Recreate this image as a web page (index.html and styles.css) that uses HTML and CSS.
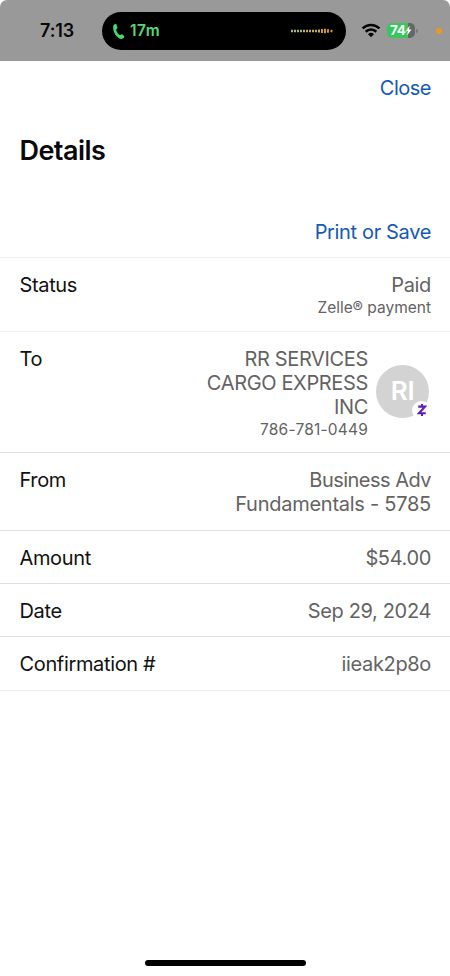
FILE: index.html
```html
<!DOCTYPE html>
<html lang="en">
<head>
<meta charset="utf-8">
<title>Payment details</title>
<link rel="stylesheet" href="styles.css">
</head>
<body>
<header class="statusbar">
  <span class="clock">7:13</span>
  <div class="island">
    <svg class="phone" width="13" height="17" viewBox="0 0 13 17"><path d="M1.2 3.2C1.4 1.3 3.4 .5 4.3 1.1L5.5 4.4C5.7 5.2 4.1 6 4.2 6.8C4.5 8.7 6 11 7.5 12C8.4 12.5 9.3 10.9 10.2 11.3L12.3 13.3C12.8 14.2 11 16.1 9.3 15.9C4.7 15.3.5 8.7 1.2 3.2Z" fill="#43dc68"/></svg>
    <span class="call">17m</span>
    <svg class="wave" width="42" height="6" viewBox="0 0 42 6" stroke-width="1.8"><path stroke="#b6cf78" d="M1 1.8v2.4M4 1.8v2.4M7 1.8v2.4M10 1.8v2.4"/><path stroke="#d5c45e" d="M13 1.8v2.4M16 1.8v2.4M19 1.8v2.4M22 1.8v2.4M25 1.8v2.4M28 1.5v3"/><path stroke="#eda52f" d="M31 1v4M34 .8v4.4M37 1.3v3.4M40.5 1.8v2.4"/></svg>
  </div>
  <svg class="wifi" width="20" height="15" viewBox="0 0 20 15" fill="none" stroke="#060606" stroke-width="2.6"><path d="M1.6 5.4a12 12 0 0 1 16.8 0M4.7 8.7a7.6 7.6 0 0 1 10.6 0"/><path d="M10 14.2L7 11.2a4.4 4.4 0 0 1 6 0Z" fill="#060606" stroke="none"/></svg>
  <div class="battery">
    <span class="level">74</span>
    <svg class="bolt" width="7" height="11" viewBox="0 0 7 11"><path d="M4.8.5L.5 6.2h2.4L2 10.5l4.5-6H4z" fill="#fff"/></svg>
  </div>
  <i class="cap"></i>
  <i class="mic"></i>
</header>
<main>
  <a class="link close">Close</a>
  <h1>Details</h1>
  <a class="link print">Print or Save</a>
  <dl>
    <div class="row faint status"><dt>Status</dt><dd><span>Paid</span><small>Zelle® payment</small></dd></div>
    <div class="row faint to"><dt>To</dt>
      <dd><span>RR SERVICES</span><span>CARGO EXPRESS</span><span>INC</span><small class="number">786-781-0449</small></dd>
      <div class="avatar"><span>RI</span>
        <div class="badge"><svg width="10" height="14" viewBox="0 0 10 14" fill="none" stroke="#6020b8" stroke-width="2.1"><path d="M1.2 3.6H8L2 10.2H8.8M5 1v2.6M5 10.2v2.8"/></svg></div>
      </div>
    </div>
    <div class="row from"><dt>From</dt><dd><span class="owner">Business Adv</span><span class="account">Fundamentals - 5785</span></dd></div>
    <div class="row single"><dt>Amount</dt><dd>$54.00</dd></div>
    <div class="row single"><dt>Date</dt><dd>Sep 29, 2024</dd></div>
    <div class="row single last"><dt>Confirmation #</dt><dd>iieak2p8o</dd></div>
  </dl>
</main>
<footer><div class="home"></div></footer>
</body>
</html>
```
FILE: styles.css
```css
* { box-sizing: border-box; margin: 0; }
body { width: 450px; height: 976px; display: flex; flex-direction: column; background: #fff; font-family: Inter, "Liberation Sans", sans-serif; font-size: 20px; line-height: 24.3px; letter-spacing: -.35px; color: #111; overflow: hidden; }
.statusbar { height: 61px; flex: none; display: flex; align-items: center; background: #999; border-radius: 7px 7px 0 0; }
.clock { width: 62px; margin: 1px 0 0 40px; font-size: 18px; font-weight: 600; letter-spacing: -.1px; color: #080808; }
.island { width: 244px; height: 38px; margin-top: 1px; border-radius: 19px; background: #000; display: flex; align-items: center; padding: 0 13px 0 10px; }
.call { margin-left: 5px; color: #55d978; font-size: 15.5px; font-weight: 600; letter-spacing: .5px; }
.wave { margin-left: auto; }
.wifi { margin-left: 15px; }
.battery { width: 28px; height: 15px; margin-left: 6px; border-radius: 5px; background: linear-gradient(90deg, #35c759 0 21px, #666 21px); display: flex; align-items: center; padding-left: 3px; }
.level { color: #fff; font-size: 13.5px; font-weight: 700; letter-spacing: -.4px; line-height: 15px; }
.cap { width: 2px; height: 4px; margin-left: 1px; border-radius: 0 2px 2px 0; background: #777; }
.mic { width: 6px; height: 6px; margin: 1px 0 0 18px; border-radius: 50%; background: #ee961d; }
main { display: flex; flex-direction: column; }
.link { align-self: flex-end; margin-right: 19px; color: #1459b5; }
.close { margin-top: 15px; letter-spacing: -.5px; }
h1 { margin: 34px 0 0 19.5px; font-size: 27px; line-height: 34px; font-weight: 600; letter-spacing: -.55px; color: #080808; }
.print { margin-top: 52px; }
dl { margin-top: 12px; }
.row { display: flex; justify-content: space-between; border-top: 1px solid #dedede; padding: 15px 19px 0 19.5px; }
.faint { border-top-color: #eee; }
dd { display: flex; flex-direction: column; align-items: flex-end; color: #636363; white-space: nowrap; }
small { margin-top: 1px; font-size: 15.5px; line-height: 20px; letter-spacing: 0; }
.number { letter-spacing: .2px; }
.owner { letter-spacing: -.52px; }
.account { letter-spacing: -.26px; }
.status { height: 74px; }
.to { height: 121px; }
.to dd { margin-left: auto; margin-right: 8px; }
.from { height: 78px; }
.single { height: 53px; }
.last { height: 55px; border-bottom: 1px solid #eee; }
.avatar { position: relative; width: 53px; height: 53px; margin: 18px 2px 0 0; border-radius: 50%; background: #d3d3d3; color: #fff; font-size: 26px; font-weight: 600; display: flex; align-items: center; justify-content: center; }
.badge { position: absolute; left: 36px; top: 36px; width: 19px; height: 19px; border-radius: 50%; background: #fff; display: flex; align-items: center; justify-content: center; }
footer { margin-top: auto; height: 16px; display: flex; justify-content: center; }
.home { width: 161px; height: 6px; border-radius: 3px; background: #000; }
```
